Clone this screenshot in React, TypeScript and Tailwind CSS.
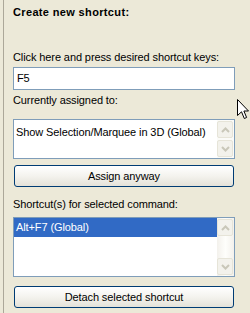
import React from "react"

function ScrollButton({ up }: { up?: boolean }) {
  return (
    <div className="flex h-[17px] w-[16px] items-center justify-center rounded-[2px] border border-[#e6e4d8] bg-[#f3f2ec]">
      <svg width="9" height="6" viewBox="0 0 9 6">
        <path
          d={up ? "M1 5 L4.5 1.5 L8 5" : "M1 1 L4.5 4.5 L8 1"}
          fill="none"
          stroke="#c9c7b9"
          strokeWidth="2"
        />
      </svg>
    </div>
  )
}

function XpButton({ label }: { label: string }) {
  return (
    <button className="ml-[1px] flex h-[22px] w-[220px] items-center justify-center rounded-[3px] border border-[#003c74] bg-gradient-to-b from-white via-[#f4f3ee] to-[#e4e2d9] text-[11px] leading-[13px] tracking-[-0.1px] text-black">
      {label}
    </button>
  )
}

export default function App() {
  return (
    <div
      className="relative h-[313px] w-[250px] overflow-hidden bg-[#ece9d8] pl-[3px] text-[11px] leading-[13px] tracking-[-0.1px] text-black"
      style={{ fontFamily: '"Liberation Sans", Arial, sans-serif' }}
    >
      <div className="flex h-full flex-col border-l border-[#aca899] pl-[9px] pr-[15px]">
        <div className="mt-[6px] font-bold tracking-[0.35px]">Create new shortcut:</div>

        <div className="mt-[32px]">Click here and press desired shortcut keys:</div>
        <div className="mt-[3px] flex h-[23px] items-center border border-[#7f9db9] bg-white px-[3px]">
          F5
        </div>

        <div className="mt-[4px]">Currently assigned to:</div>
        <div className="mt-[12px] flex h-[40px] border border-[#7f9db9] bg-white">
          <div className="flex-1 px-[2px] pt-[6px]">Show Selection/Marquee in 3D (Global)</div>
          <div className="flex w-[17px] flex-col justify-between bg-[#fbfbf8] py-[1px]">
            <ScrollButton up />
            <ScrollButton />
          </div>
        </div>

        <div className="mt-[6px]">
          <XpButton label="Assign anyway" />
        </div>

        <div className="mt-[11px]">Shortcut(s) for selected command:</div>
        <div className="mt-[6px] flex h-[60px] border border-[#7f9db9] bg-white">
          <div className="flex-1">
            <div className="flex h-[19px] items-center bg-[#316ac5] px-[2px] text-white">Alt+F7 (Global)</div>
          </div>
          <div className="flex w-[17px] flex-col justify-between bg-gradient-to-r from-[#f3f1ec] via-[#fefefb] to-[#f3f1ec] py-[1px]">
            <ScrollButton up />
            <ScrollButton />
          </div>
        </div>

        <div className="mt-[9px]">
          <XpButton label="Detach selected shortcut" />
        </div>
      </div>

      {/* mouse pointer */}
      <svg className="absolute left-[237px] top-[99px]" width="13" height="21" viewBox="0 0 13 21">
        <path
          d="M0.5 0.5 L0.5 16.5 L4.5 12.8 L7.3 19.5 L9.6 18.5 L6.9 12 L11.5 12 Z"
          fill="white"
          stroke="black"
          strokeWidth="1"
          strokeLinejoin="miter"
        />
      </svg>
    </div>
  )
}
